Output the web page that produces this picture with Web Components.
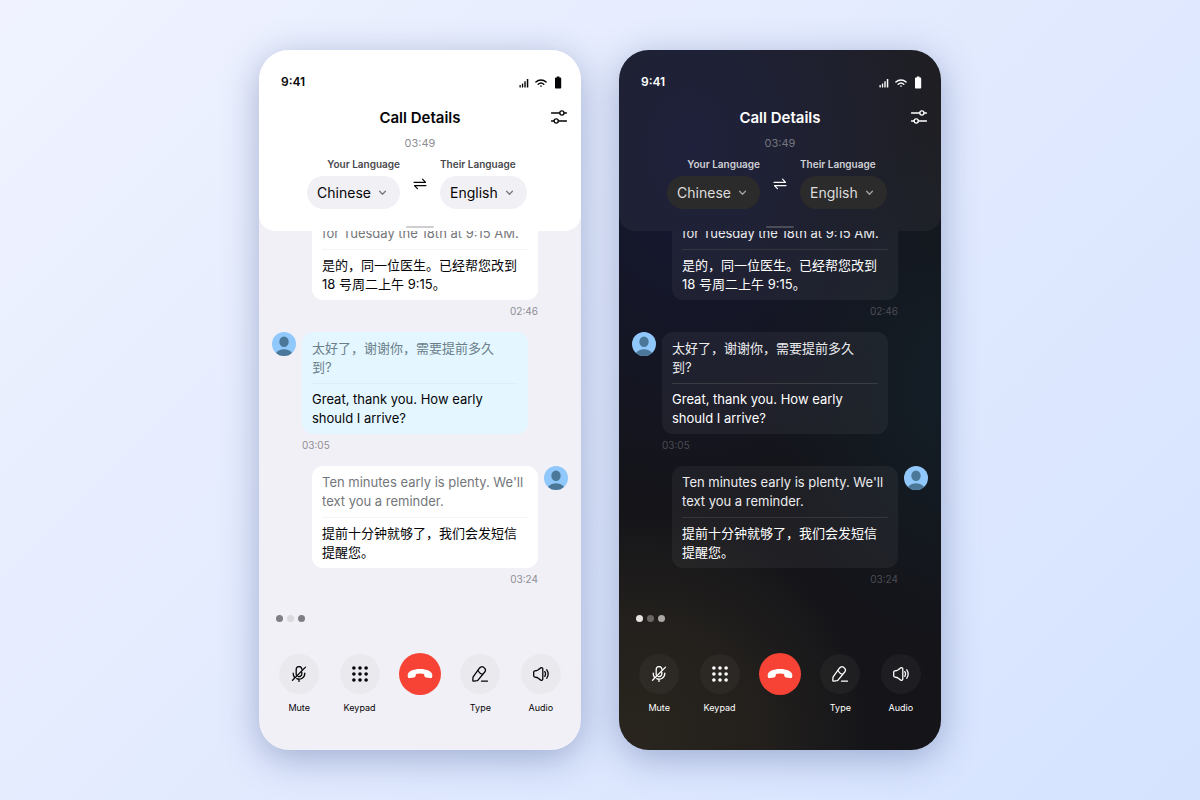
<!DOCTYPE html>
<html lang="en">
<head>
<meta charset="utf-8">
<meta name="viewport" content="width=device-width, initial-scale=1">
<title>Call Details</title>
<style>
  *, *::before, *::after { box-sizing: border-box; }
  body {
    margin: 0;
    min-height: 100vh;
    font-family: Inter, "Noto Sans CJK SC", sans-serif;
    background: linear-gradient(135deg, #f0f3ff 0%, #e2eafe 50%, #d5e3ff 100%);
  }
</style>
</head>
<body>
<call-showcase>
  <call-screen theme="light"></call-screen>
  <call-screen theme="dark"></call-screen>
</call-showcase>

<template id="showcase-template">
  <style>
    :host {
      display: flex;
      justify-content: center;
      gap: 38px;
      min-height: 100vh;
      padding: 50px 20px;
      box-sizing: border-box;
    }
  </style>
  <slot></slot>
</template>

<template id="screen-template">
  <style>
    :host {
      --ink: #050507;
      --sheet: #ffffff;
      --label: #48484c;
      --muted: #8e8e93;
      --pill: #f1f0f5;
      --pill-ink: #050507;
      --chevron: #77777c;
      --handle: #cfcfd2;
      --bubble: #ffffff;
      --bubble-alt: #e4f6ff;
      --original: #74767b;
      --original-alt: #6b7f8a;
      --rule: #f4f4f6;
      --rule-alt: #dcf0f8;
      --stamp: #8e8e93;
      --dot-a: #7f7e83;
      --dot-b: #dad9de;
      --dot-c: #7f7e83;
      --round: #eae9ee;
      --surface: #f1f0f6;
      display: flex;
      flex-direction: column;
      flex: 1 1 0;
      max-width: 322px;
      overflow: hidden;
      border-radius: 30px;
      color: var(--ink);
      background: var(--surface);
      box-shadow: 0 8px 36px rgba(60, 82, 140, .4);
    }
    :host([theme="dark"]) {
      --ink: #ffffff;
      --sheet: rgba(255, 255, 255, .045);
      --label: #d0d0d6;
      --muted: #75767f;
      --pill: #2c2b2b;
      --pill-ink: #dcdcdc;
      --chevron: #a3a3a3;
      --handle: #4a4c57;
      --bubble: rgba(255, 255, 255, .05);
      --bubble-alt: rgba(255, 255, 255, .05);
      --original: #ececef;
      --original-alt: #ececef;
      --rule: #35363d;
      --rule-alt: #3b3d43;
      --stamp: #4b4c52;
      --dot-a: #e6e4e2;
      --dot-b: #6a6764;
      --dot-c: #aaa7a4;
      --round: rgba(255, 255, 255, .04);
      --surface:
        radial-gradient(ellipse 240px 230px at 6% 98%, #29251e 0%, rgba(41, 37, 30, .7) 50%, rgba(41, 37, 30, 0) 100%),
        radial-gradient(ellipse 200px 260px at 106% 48%, #131e27 0%, rgba(19, 30, 39, 0) 100%),
        radial-gradient(ellipse 260px 360px at 22% 14%, #151734 0%, rgba(21, 24, 48, .6) 50%, rgba(21, 24, 48, 0) 100%),
        #141419;
    }
  </style>
  <call-header elapsed="03:49">Call Details</call-header>
  <call-transcript>
    <call-message side="right" continued time="02:46">
      <span slot="original">for Tuesday the 18th at 9:15 AM.</span>
      <span lang="zh">是的，同一位医生。已经帮您改到 18 号周二上午 9:15。</span>
    </call-message>
    <call-message side="left" time="03:05">
      <span slot="original" lang="zh">太好了，谢谢你，需要提前多久<br>到?</span>
      <span>Great, thank you. How early should I arrive?</span>
    </call-message>
    <call-message side="right" time="03:24">
      <span slot="original">Ten minutes early is plenty. We'll text you a reminder.</span>
      <span lang="zh">提前十分钟就够了，我们会发短信提醒您。</span>
    </call-message>
  </call-transcript>
  <typing-dots></typing-dots>
  <call-controls></call-controls>
</template>

<template id="header-template">
  <style>
    :host {
      display: block;
      flex: none;
      background: var(--sheet);
      border-radius: 0 0 16px 16px;
      padding: 24px 13px 3px;
    }
    .status {
      display: flex;
      align-items: center;
      justify-content: space-between;
      height: 16px;
      padding: 0 5px 0 9px;
      font-size: 12px;
      font-weight: 600;
      line-height: 16px;
    }
    .signals { display: flex; align-items: center; padding-top: 2px; }
    .signals svg { display: block; margin-left: 6px; }
    .bar {
      display: grid;
      grid-template-columns: 18px 1fr 18px;
      align-items: center;
      padding-top: 18px;
    }
    h2 {
      grid-column: 2;
      margin: 0;
      font-size: 15px;
      line-height: 20px;
      font-weight: 600;
      text-align: center;
    }
    button {
      display: grid;
      place-items: center;
      width: 18px;
      height: 18px;
      padding: 0;
      border: 0;
      background: none;
      color: inherit;
    }
    .bar button { align-self: start; }
    .elapsed {
      margin: 7px 0;
      font-size: 11px;
      line-height: 16px;
      text-align: center;
      color: var(--muted);
    }
    .languages {
      display: grid;
      grid-template-columns: 1fr 40px 1fr;
      align-items: center;
    }
    .languages button { justify-self: center; }
    .handle {
      width: 28px;
      height: 2px;
      margin: 17px auto 0;
      border-radius: 1px;
      background: var(--handle);
    }
    svg { fill: none; stroke: currentColor; stroke-linecap: round; stroke-linejoin: round; }
    svg.solid { fill: currentColor; stroke: none; }
  </style>
  <div class="status">
    <span>9:41</span>
    <div class="signals">
      <svg class="solid" width="10" height="10" viewBox="0 0 10 10" aria-hidden="true">
        <rect x=".5" y="7" width="1.3" height="2.6" rx=".4"/><rect x="2.9" y="5.4" width="1.3" height="4.2" rx=".4"/>
        <rect x="5.3" y="3.2" width="1.4" height="6.4" rx=".4"/><rect x="7.8" y="1" width="1.5" height="8.6" rx=".4"/>
      </svg>
      <svg width="12" height="10" viewBox="0 0 12 10" aria-hidden="true" stroke-width="1.4">
        <path d="M.9 4.1C3.8 1.2 8.2 1.2 11.1 4.1M3.2 6.3c1.6-1.5 4-1.5 5.6 0"/>
        <path d="M4.9 7.900c.6-.5 1.600-.5 2.200 0L6 9.100z" fill="currentColor" stroke="none"/>
      </svg>
      <svg class="solid" width="10" height="14" viewBox="0 0 10 14" aria-hidden="true">
        <path d="M3.800.500h2.600v1h.9c.5 0 .9.4.9.9v9.200c0 .6-.4 1-1 1H3c-.6 0-1-.4-1-1V2.400c0-.5.4-.9.9-.9h.9z"/>
      </svg>
    </div>
  </div>
  <div class="bar">
    <h2><slot></slot></h2>
    <button type="button" aria-label="Call settings">
      <svg width="18" height="16" viewBox="0 0 18 16" stroke-width="1.300">
        <path d="M1.500 4h8.200M14.100 4h2.400M1.500 12H4M8.400 12h8.100"/>
        <circle cx="11.900" cy="4" r="2.100"/><circle cx="6.200" cy="12" r="2.100"/>
      </svg>
    </button>
  </div>
  <p class="elapsed"></p>
  <div class="languages">
    <language-picker label="Your Language" value="Chinese" align="end"></language-picker>
    <button type="button" aria-label="Swap languages">
      <svg width="14" height="12" viewBox="0 0 14 12" stroke-width="1.200">
        <path d="M1 4.300h11.500L9.600 1.200M13 7.600H1.500l2.900 3"/>
      </svg>
    </button>
    <language-picker label="Their Language" value="English"></language-picker>
  </div>
  <div class="handle"></div>
</template>

<template id="picker-template">
  <style>
    :host { display: flex; flex-direction: column; align-items: flex-start; gap: 6px; }
    :host([align="end"]) { align-items: flex-end; }
    label {
      font-size: 10px;
      font-weight: 600;
      line-height: 12px;
      color: var(--label);
      white-space: nowrap;
    }
    .pill { display: grid; align-items: center; }
    select, svg { grid-area: 1 / 1; }
    select {
      appearance: none;
      field-sizing: content;
      height: 33px;
      margin: 0;
      padding: 0 29px 0 10px;
      border: 0;
      border-radius: 17px;
      background: var(--pill);
      color: var(--pill-ink);
      font: 400 14px/20px Inter, sans-serif;
    }
    svg {
      justify-self: end;
      margin-right: 13px;
      fill: none;
      stroke: var(--chevron);
      stroke-width: 1.300;
      stroke-linecap: round;
      stroke-linejoin: round;
      pointer-events: none;
    }
  </style>
  <label for="language"></label>
  <div class="pill">
    <select id="language"><option>Chinese</option><option>English</option></select>
    <svg width="9" height="8" viewBox="0 0 9 8" aria-hidden="true"><path d="M1.600 2.200l2.900 3 2.900-3"/></svg>
  </div>
</template>

<template id="transcript-template">
  <style>
    :host {
      display: flex;
      flex-direction: column;
      justify-content: flex-end;
      flex: 1 1 0;
      min-height: 0;
      gap: 14px;
      padding: 0 13px;
      overflow: hidden;
    }
  </style>
  <slot></slot>
</template>

<template id="message-template">
  <style>
    :host {
      display: grid;
      flex: none;
      grid-template-columns: 24px minmax(0, 226px);
      column-gap: 6px;
      font-size: 13px;
      line-height: 19px;
    }
    :host([side="right"]) { grid-template-columns: minmax(0, 226px) 24px; justify-content: end; }
    svg { display: block; width: 24px; height: 24px; grid-row: 1; }
    :host([side="right"]) svg { grid-column: 2; }
    :host([continued]) svg { visibility: hidden; }
    .body { grid-row: 1; grid-column: 2; }
    :host([side="right"]) .body { grid-column: 1; }
    .bubble {
      --line: var(--rule-alt);
      padding: 7px 10px 6px;
      border-radius: 11px;
      background: var(--bubble-alt);
    }
    :host([side="right"]) .bubble { --line: var(--rule); background: var(--bubble); }
    p { margin: 0; }
    .original { color: var(--original-alt); }
    :host([side="right"]) .original { color: var(--original); }
    hr { height: 1px; margin: 6px 0; border: 0; background: var(--line); }
    time {
      display: block;
      margin-top: 4px;
      font-size: 10px;
      line-height: 14px;
      color: var(--stamp);
    }
    :host([side="right"]) time { text-align: right; }
  </style>
  <svg viewBox="0 0 24 24" role="img" aria-label="Speaker">
    <clipPath id="disc"><circle cx="12" cy="12" r="12"/></clipPath>
    <g clip-path="url(#disc)">
      <rect width="24" height="24" fill="#90c8fb"/>
      <ellipse cx="12" cy="9.700" rx="4.700" ry="5.200" fill="#4b7799"/>
      <ellipse cx="12" cy="23.500" rx="8.700" ry="6.200" fill="#4b7799"/>
    </g>
  </svg>
  <div class="body">
    <div class="bubble">
      <p class="original"><slot name="original"></slot></p>
      <hr>
      <p><slot></slot></p>
    </div>
    <time></time>
  </div>
</template>

<template id="dots-template">
  <style>
    :host { display: flex; flex: none; gap: 4px; padding: 29px 17px 31px; }
    i { width: 7px; height: 7px; border-radius: 50%; background: var(--dot-a); }
    i:nth-of-type(2) { background: var(--dot-b); }
    i:nth-of-type(3) { background: var(--dot-c); }
  </style>
  <i></i><i></i><i></i>
</template>

<template id="controls-template">
  <style>
    :host {
      display: grid;
      flex: none;
      grid-template-columns: repeat(5, 1fr);
      padding: 0 10px 36px;
    }
    svg { display: block; fill: none; stroke: currentColor; stroke-width: 1.300; stroke-linecap: round; stroke-linejoin: round; }
    .solid { fill: currentColor; stroke: none; }
  </style>
  <call-control label="Mute">
    <svg width="16" height="16" viewBox="0 0 16 16">
      <path d="M5.200 8.900V3.400a2.800 2.800 0 0 1 5.600-.2M10.800 6.300v1.600a2.800 2.800 0 0 1-3.700 2.600M2.200 7.200c0 1.600.4 2.800 1.200 3.800M5.700 12.700c3.800 1.500 8.100-.9 8.100-5.500M8 13.200v2.300M1.500 14.300 14.500 1.100"/>
    </svg>
  </call-control>
  <call-control label="Keypad">
    <svg class="solid" width="16" height="16" viewBox="0 0 16 16">
      <circle cx="1.900" cy="2" r="1.800"/><circle cx="8" cy="2" r="1.800"/><circle cx="14.100" cy="2" r="1.800"/>
      <circle cx="1.900" cy="8" r="1.800"/><circle cx="8" cy="8" r="1.800"/><circle cx="14.100" cy="8" r="1.800"/>
      <circle cx="1.900" cy="14" r="1.800"/><circle cx="8" cy="14" r="1.800"/><circle cx="14.100" cy="14" r="1.800"/>
    </svg>
  </call-control>
  <call-control label="End call" variant="end">
    <svg class="solid" width="26" height="12" viewBox="0 0 26 12">
      <path d="M13 1C19.500 1 25.300 3.300 25.300 7V8.200c0 1.400-.9 2.100-2.300 1.900l-3.700-.5c-1.300-.2-1.800-.8-2-2l-.2-1.500c-2.400-.7-5.800-.7-8.200 0l-.2 1.500c-.2 1.200-.7 1.800-2 2L3 10.100C1.600 10.300.7 9.600.7 8.200V7C.7 3.300 6.500 1 13 1z"/>
    </svg>
  </call-control>
  <call-control label="Type">
    <svg width="16" height="16" viewBox="0 0 16 16">
      <path d="M1 11.200 7.400 2.200C8.500.600 10.200.300 11.600 1.300l.5.400c1.500 1.100 1.700 2.800.6 4.300L6 14.100c-.2.300-.5.400-.8.500l-3.400.5c-.6.100-1-.3-1-.9zM6.200 4c.4 2.200 2.300 3.900 4.600 4.300M9.500 15.200h6"/>
    </svg>
  </call-control>
  <call-control label="Audio">
    <svg width="16" height="16" viewBox="0 0 16 16">
      <path d="M.7 6.200c0-.7.400-1.200 1.100-1.300l2-.4c.4-.1.800-.3 1.100-.5L7.800 1.900c.9-.6 2-.1 2 1v10.200c0 1.100-1.100 1.600-2 1L4.900 12c-.3-.2-.7-.4-1.100-.5l-2-.4C1.100 11 .7 10.500.7 9.800zM11.800 5.600c.9 1.500.9 3.300 0 4.800M13.800 3.800c1.700 2.600 1.700 5.800 0 8.400"/>
    </svg>
  </call-control>
</template>

<template id="control-template">
  <style>
    :host { display: block; }
    button {
      display: flex;
      flex-direction: column;
      align-items: center;
      gap: 6px;
      width: 100%;
      padding: 0;
      border: 0;
      background: none;
      color: inherit;
      font: 400 9px/13px Inter, sans-serif;
    }
    .round {
      display: grid;
      place-items: center;
      width: 40px;
      height: 40px;
      margin: 1px;
      border-radius: 50%;
      background: var(--round);
    }
    :host([variant="end"]) .round { width: 42px; height: 42px; margin: 0; background: #f64336; color: #fff; }
  </style>
  <button type="button"><span class="round"><slot></slot></span></button>
</template>

<script>
  class TemplateElement extends HTMLElement {
    connectedCallback() {
      if (this.shadowRoot) return;
      const root = this.attachShadow({ mode: 'open' });
      root.append(document.getElementById(this.constructor.template).content.cloneNode(true));
      this.fill(root);
    }
    fill() {}
  }

  customElements.define('call-showcase', class extends TemplateElement {
    static template = 'showcase-template';
  });

  customElements.define('call-screen', class extends TemplateElement {
    static template = 'screen-template';
  });

  customElements.define('call-header', class extends TemplateElement {
    static template = 'header-template';
    fill(root) {
      root.querySelector('.elapsed').textContent = this.getAttribute('elapsed');
    }
  });

  customElements.define('language-picker', class extends TemplateElement {
    static template = 'picker-template';
    fill(root) {
      root.querySelector('label').textContent = this.getAttribute('label');
      root.querySelector('select').value = this.getAttribute('value');
    }
  });

  customElements.define('call-transcript', class extends TemplateElement {
    static template = 'transcript-template';
  });

  customElements.define('call-message', class extends TemplateElement {
    static template = 'message-template';
    fill(root) {
      root.querySelector('time').textContent = this.getAttribute('time');
    }
  });

  customElements.define('typing-dots', class extends TemplateElement {
    static template = 'dots-template';
  });

  customElements.define('call-controls', class extends TemplateElement {
    static template = 'controls-template';
  });

  customElements.define('call-control', class extends TemplateElement {
    static template = 'control-template';
    fill(root) {
      const button = root.querySelector('button');
      const label = this.getAttribute('label');
      if (this.getAttribute('variant') === 'end') {
        button.setAttribute('aria-label', label);
      } else {
        const text = document.createElement('span');
        text.textContent = label;
        button.append(text);
      }
    }
  });
</script>
</body>
</html>
